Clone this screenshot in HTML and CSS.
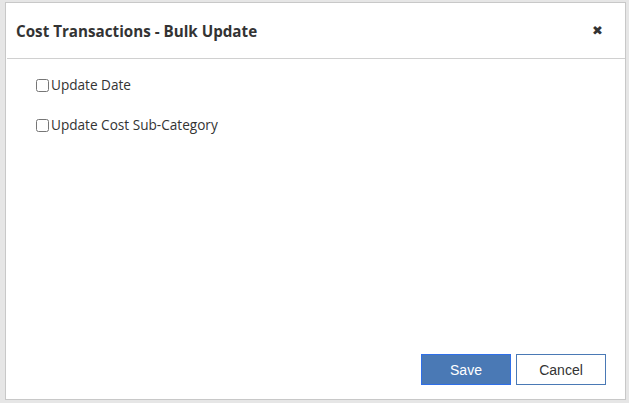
FILE: index.html
```html
<!DOCTYPE html>
<html>
<head>
<meta charset="utf-8">
<link rel="stylesheet" href="styles.css">
</head>
<body>
<div class="backdrop"></div>
<div class="dialog">
  <div class="header">
    <h1 class="title">Cost Transactions - Bulk Update</h1>
    <span class="close">&#x2716;</span>
  </div>
  <div class="body">
    <label class="opt"><input type="checkbox" class="cb">Update Date</label>
    <label class="opt"><input type="checkbox" class="cb">Update Cost Sub-Category</label>
  </div>
  <div class="footer">
    <button class="btn save">Save</button>
    <button class="btn cancel">Cancel</button>
  </div>
</div>
</body>
</html>
```

FILE: styles.css
```css
html, body {
  margin: 0;
  padding: 0;
  width: 629px;
  height: 403px;
  overflow: hidden;
  background: #e6e6e6;
  font-family: "Open Sans", "Noto Sans", sans-serif;
}
.backdrop {
  height: 403px;
}
.dialog {
  position: absolute;
  left: 5px;
  top: 2px;
  width: 619px;
  height: 396px;
  background: #fff;
  border: 1px solid #c8c8c8;
  display: flex;
  flex-direction: column;
}
.header {
  height: 55px;
  border-bottom: 1px solid #d0d0d0;
  margin-left: 1px;
  display: flex;
  align-items: center;
  justify-content: space-between;
  padding: 0 22px 0 9px;
}
.title {
  margin: 0;
  font-size: 15.2px;
  font-weight: 700;
  color: #333;
}
.close {
  font-size: 13px;
  color: #333;
  font-family: "DejaVu Sans", sans-serif;
}
.body {
  flex: 1;
  display: flex;
  flex-direction: column;
  gap: 20px;
  padding: 16px 0 0 30px;
}
.opt {
  display: flex;
  align-items: center;
  font-size: 13.6px;
  color: #333;
  line-height: 20px;
}
.cb {
  margin: 0 2px 0 0;
  width: 13px;
  height: 13px;
}
.footer {
  display: flex;
  justify-content: flex-end;
  gap: 5px;
  padding: 0 19px 14px 0;
}
.btn {
  width: 90px;
  height: 31px;
  font-family: "Liberation Sans", Arial, sans-serif;
  font-size: 14px;
  padding: 0;
}
.save {
  background: #4a79b5;
  border: 1px solid #2f6fe8;
  color: #fff;
}
.cancel {
  background: #fff;
  border: 1px solid #4a79b5;
  color: #333;
}
```
